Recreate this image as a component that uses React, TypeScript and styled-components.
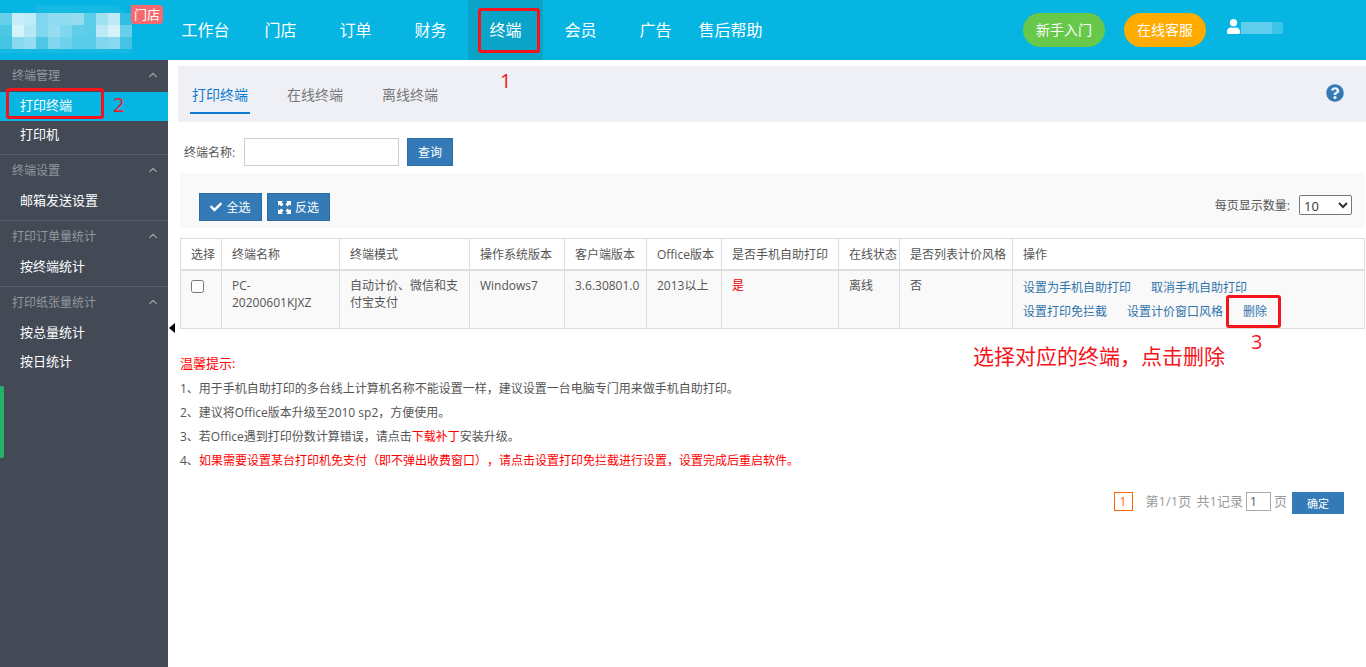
import { createGlobalStyle, styled } from "styled-components";
import { FaCheck, FaQuestionCircle, FaUser } from "react-icons/fa";
import { FiChevronUp } from "react-icons/fi";

const GlobalStyle = createGlobalStyle`
  html, body { margin: 0; padding: 0; background: #fff; }
  body {
    font-family: "Open Sans", "Noto Sans CJK SC", "Liberation Sans", sans-serif;
    font-size: 12px;
    color: #555;
    overflow: hidden;
    text-spacing-trim: space-all;
  }
  * { box-sizing: border-box; }
`;

const Page = styled.div`
  position: relative;
  width: 1366px;
  height: 667px;
  overflow: hidden;
`;

const Header = styled.header`
  display: flex;
  align-items: stretch;
  height: 60px;
  background: #06b5e2;
`;
const LogoArea = styled.div`
  position: relative;
  width: 168px;
  flex: none;
`;
const Mosaic = styled.svg`
  position: absolute;
  left: 0;
  top: 6px;
`;
const Badge = styled.span`
  position: absolute;
  left: 131px;
  top: 5px;
  width: 32px;
  height: 19px;
  border-radius: 0 4px 4px 4px;
  background: #f8696f;
  color: #fff;
  font-size: 13px;
  line-height: 19px;
  text-align: center;
`;
const Nav = styled.nav`
  display: flex;
`;
const NavItem = styled.a<{ $active?: boolean }>`
  width: 75px;
  height: 60px;
  color: #fff;
  font-size: 16px;
  line-height: 60px;
  text-align: center;
  white-space: nowrap;
  background: ${(p) => (p.$active ? "#0ba4c9" : "transparent")};
`;
const HeaderRight = styled.div`
  display: flex;
  align-items: center;
  margin-left: auto;
  padding-right: 81px;
`;
const PillButton = styled.a<{ $bg: string }>`
  width: 82px;
  height: 34px;
  margin-right: 19px;
  border-radius: 17px;
  background: ${(p) => p.$bg};
  color: #fff;
  font-size: 14px;
  line-height: 34px;
  text-align: center;
`;
const UserBox = styled.div`
  display: flex;
  align-items: center;
  width: 59px;
  margin: -8px 0 0 1px;
  color: #fff;
  font-size: 15px;
`;
const BlurName = styled.span`
  width: 42px;
  height: 12px;
  margin-top: 4px;
  background: linear-gradient(90deg, #5fcdec 0 75%, #3cc3e8 75% 100%);
`;

const Body = styled.div`
  display: flex;
  height: 607px;
`;
const Sidebar = styled.aside`
  position: relative;
  width: 168px;
  flex: none;
  background: #434a56;
`;
const Group = styled.div`
  padding-bottom: 4px;
  & + & { border-top: 1px solid #5a606b; }
`;
const GroupTitle = styled.div`
  display: flex;
  align-items: center;
  justify-content: space-between;
  height: 32px;
  padding: 0 8px 2px 12px;
  color: #93979e;
  font-size: 12px;
`;
const SideItem = styled.a<{ $active?: boolean }>`
  display: block;
  height: 29px;
  padding-left: 20px;
  background: ${(p) => (p.$active ? "#06b5e2" : "transparent")};
  color: #fff;
  font-size: 13px;
  line-height: 26px;
`;
const GreenStrip = styled.div`
  position: absolute;
  left: 0;
  top: 326px;
  width: 4px;
  height: 72px;
  border-radius: 0 2px 2px 0;
  background: #25b368;
`;
const CollapseArrow = styled.div`
  position: absolute;
  left: 169px;
  top: 263px;
  width: 0;
  height: 0;
  border-top: 5px solid transparent;
  border-bottom: 5px solid transparent;
  border-right: 6px solid #000;
`;

const Main = styled.main`
  flex: 1;
  padding: 6px 2px 0 10px;
`;
const TabBar = styled.div`
  display: flex;
  align-items: flex-start;
  gap: 35px;
  height: 56px;
  margin-right: -2px;
  padding: 13px 0 0 12px;
  position: relative;
  background: #eff0f5;
`;
const Tab = styled.a<{ $active?: boolean }>`
  height: 35px;
  padding: 0 2px;
  border-bottom: 2px solid ${(p) => (p.$active ? "#0c7bd0" : "transparent")};
  color: ${(p) => (p.$active ? "#0c7bd0" : "#777")};
  font-size: 14px;
  line-height: 32px;
`;
const HelpIcon = styled(FaQuestionCircle)`
  position: absolute;
  right: 23px;
  top: 18px;
  color: #337ab7;
  font-size: 18px;
`;

const SearchRow = styled.div`
  display: flex;
  align-items: center;
  height: 28px;
  margin: 16px 0 7px 6px;
`;
const Label = styled.label`
  color: #555;
  font-size: 12px;
  white-space: nowrap;
`;
const TextInput = styled.input`
  width: 155px;
  height: 28px;
  margin: 0 8px 0 auto;
  border: 1px solid #ccc;
  outline: 0;
  background: #fff;
`;
const SearchField = styled.div`
  display: flex;
  align-items: center;
  width: 223px;
`;
const BlueButton = styled.button`
  display: inline-flex;
  align-items: center;
  justify-content: center;
  gap: 4px;
  height: 28px;
  padding: 0;
  border: 1px solid #2e6da4;
  background: #337ab7;
  color: #fff;
  font-family: inherit;
  font-size: 12px;
`;
const QueryButton = styled(BlueButton)`
  width: 46px;
`;
const ActionButton = styled(BlueButton)`
  width: 63px;
`;

const Toolbar = styled.div`
  display: flex;
  align-items: flex-end;
  gap: 5px;
  height: 55px;
  margin: 0 0 10px 2px;
  padding: 0 13px 7px 19px;
  background: #f9f9f9;
`;
const PageSize = styled.div`
  display: flex;
  align-items: center;
  gap: 9px;
  height: 20px;
  margin: 0 0 6px auto;
`;
const SizeSelect = styled.select`
  width: 53px;
  height: 20px;
  border: 1px solid #777;
  border-radius: 2px;
  background: #fff;
  color: #333;
  font-family: inherit;
  font-size: 13px;
`;

const Table = styled.table`
  width: 1184px;
  margin-left: 2px;
  border-collapse: collapse;
  table-layout: fixed;
  font-size: 12px;
`;
const Th = styled.th`
  height: 31px;
  padding: 0 0 0 10px;
  border: 1px solid #ddd;
  border-bottom-width: 2px;
  color: #555;
  font-weight: 400;
  text-align: left;
  white-space: nowrap;
`;
const Td = styled.td`
  height: 59px;
  padding: 6px 10px 0;
  border: 1px solid #ddd;
  background: #f9f9f9;
  color: #555;
  line-height: 17px;
  vertical-align: top;
`;
const NarrowTd = styled(Td)`
  padding-right: 0;
  white-space: nowrap;
`;
const RedCell = styled(Td)`
  color: #e00;
`;
const CheckCell = styled(Td)`
  padding: 9px 0 0 10px;
`;
const CheckBox = styled.input`
  display: block;
  width: 13px;
  height: 13px;
  margin: 0;
`;
const ActionRow = styled.div`
  display: flex;
  gap: 20px;
  height: 24px;
  line-height: 24px;
  white-space: nowrap;
`;
const ActionLink = styled.a`
  color: #2f74ad;
`;
const ActionCell = styled(Td)`
  padding-top: 5px;
`;

const Tips = styled.div`
  margin: 22px 0 0 2px;
  line-height: 24px;
  color: #555;
`;
const TipTitle = styled.div`
  margin-bottom: 2px;
  color: #f00;
  font-size: 13px;
`;
const Red = styled.span`
  color: #f00;
`;

const Pager = styled.div`
  display: flex;
  align-items: flex-start;
  justify-content: flex-end;
  margin: 19px 21px 0 0;
  color: #999;
  font-size: 13px;
  line-height: 19px;
  word-spacing: 2px;
`;
const PageNum = styled.span`
  width: 19px;
  height: 19px;
  margin-right: 13px;
  border: 1px solid #f60;
  color: #f60;
  font-size: 12px;
  line-height: 17px;
  text-align: center;
`;
const PageInput = styled.input`
  width: 25px;
  height: 19px;
  margin: 0 3px;
  padding: 0 0 0 3px;
  border: 1px solid #aaa;
  color: #555;
  font-family: inherit;
  font-size: 12px;
`;
const ConfirmButton = styled(BlueButton)`
  width: 52px;
  height: 22px;
  margin-left: 5px;
  border: 0;
  font-size: 11px;
`;

const Mark = styled.div`
  position: absolute;
  border: 3px solid #f5141c;
  border-radius: 3px;
`;
const Note = styled.span`
  position: absolute;
  color: #f5141c;
  font-size: 20px;
  line-height: 1;
  white-space: nowrap;
`;
const HintNote = styled(Note)`
  font-size: 21px;
`;

const navItems = ["工作台", "门店", "订单", "财务", "终端", "会员", "广告", "售后帮助"];
const columns = [
  ["选择", 41],
  ["终端名称", 118],
  ["终端模式", 130],
  ["操作系统版本", 95],
  ["客户端版本", 82],
  ["Office版本", 75],
  ["是否手机自助打印", 117],
  ["在线状态", 61],
  ["是否列表计价风格", 113],
  ["操作", 352],
] as const;
const sideGroups = [
  { title: "终端管理", items: ["打印终端", "打印机"] },
  { title: "终端设置", items: ["邮箱发送设置"] },
  { title: "打印订单量统计", items: ["按终端统计"] },
  { title: "打印纸张量统计", items: ["按总量统计", "按日统计"] },
];
// pixelated (blurred out) logo from the screenshot
const mosaic = [
  ["#66cfe9", "#c7eef8", "#bdebf7", "#7fd6ee", "#8fdbf0", "#8fdbf0", "#95dcf1", "#5ccde9", "#9fe0f3", "#bdeaf6", "#30bfe0"],
  ["#4cc8e6", "#d6f2fa", "#b5e8f6", "#80d7ee", "#96ddf1", "#7fd6ee", "#5fcfe9", "#5ccde9", "#bce9f6", "#d6f3fa", "#66d0ea"],
  ["#45c5e4", "#8bd9ef", "#96ddf1", "#4fc8e6", "#80d7ee", "#6fd2ec", "#58cce8", "#58cce8", "#7fd6ee", "#88d9ef", "#44c3e3"],
];

function ExpandIcon() {
  return (
    <svg width="13" height="13" viewBox="0 0 13 13" fill="#fff">
      <path d="M0 0h5L3.6 1.4 5.5 3.3 3.3 5.5 1.4 3.6 0 5zM13 0v5l-1.4-1.4-1.9 1.9-2.2-2.2 1.9-1.9L8 0zM0 13V8l1.4 1.4 1.9-1.9 2.2 2.2-1.9 1.9L5 13zM13 13H8l1.4-1.4-1.9-1.9 2.2-2.2 1.9 1.9L13 8z" />
    </svg>
  );
}

export default function App() {
  return (
    <Page>
      <GlobalStyle />
      <Header>
        <LogoArea>
          <Mosaic width="132" height="47" viewBox="0 0 132 47">
            <path d="M36 7V3a3 3 0 0 1 3-3h74c6 0 9 3 11 7zM0 43h132c0 2-2 4-5 4H0z" fill="#16b9e1" />
            {mosaic.map((row, y) =>
              row.map((c, x) => <rect key={x + "-" + y} x={x * 12} y={7 + y * 12} width="12" height="12" fill={c} />)
            )}
          </Mosaic>
          <Badge>门店</Badge>
        </LogoArea>
        <Nav>
          {navItems.map((n) => (
            <NavItem key={n} $active={n === "终端"}>
              {n}
            </NavItem>
          ))}
        </Nav>
        <HeaderRight>
          <PillButton $bg="#67c84a">新手入门</PillButton>
          <PillButton $bg="#ffab00">在线客服</PillButton>
          <UserBox>
            <FaUser />
            <BlurName />
          </UserBox>
        </HeaderRight>
      </Header>
      <Body>
        <Sidebar>
          {sideGroups.map((g) => (
            <Group key={g.title}>
              <GroupTitle>
                {g.title}
                <FiChevronUp size={14} />
              </GroupTitle>
              {g.items.map((i) => (
                <SideItem key={i} $active={i === "打印终端"}>
                  {i}
                </SideItem>
              ))}
            </Group>
          ))}
          <GreenStrip />
          <CollapseArrow />
        </Sidebar>
        <Main>
          <TabBar>
            <Tab $active>打印终端</Tab>
            <Tab>在线终端</Tab>
            <Tab>离线终端</Tab>
            <HelpIcon />
          </TabBar>
          <SearchRow>
            <SearchField>
              <Label>终端名称:</Label>
              <TextInput />
            </SearchField>
            <QueryButton>查询</QueryButton>
          </SearchRow>
          <Toolbar>
            <ActionButton>
              <FaCheck size={12} />
              全选
            </ActionButton>
            <ActionButton>
              <ExpandIcon />
              反选
            </ActionButton>
            <PageSize>
              <Label>每页显示数量:</Label>
              <SizeSelect defaultValue="10">
                <option>10</option>
              </SizeSelect>
            </PageSize>
          </Toolbar>
          <Table>
            <colgroup>
              {columns.map(([name, w]) => (
                <col key={name} width={w} />
              ))}
            </colgroup>
            <thead>
              <tr>
                {columns.map(([name]) => (
                  <Th key={name}>{name}</Th>
                ))}
              </tr>
            </thead>
            <tbody>
              <tr>
                <CheckCell>
                  <CheckBox type="checkbox" />
                </CheckCell>
                <Td>PC-20200601KJXZ</Td>
                <Td>自动计价、微信和支付宝支付</Td>
                <Td>Windows7</Td>
                <NarrowTd>3.6.30801.0</NarrowTd>
                <NarrowTd>2013以上</NarrowTd>
                <RedCell>是</RedCell>
                <Td>离线</Td>
                <Td>否</Td>
                <ActionCell>
                  <ActionRow>
                    <ActionLink>设置为手机自助打印</ActionLink>
                    <ActionLink>取消手机自助打印</ActionLink>
                  </ActionRow>
                  <ActionRow>
                    <ActionLink>设置打印免拦截</ActionLink>
                    <ActionLink>设置计价窗口风格</ActionLink>
                    <ActionLink>删除</ActionLink>
                  </ActionRow>
                </ActionCell>
              </tr>
            </tbody>
          </Table>
          <Tips>
            <TipTitle>温馨提示:</TipTitle>
            <div>1、用于手机自助打印的多台线上计算机名称不能设置一样，建议设置一台电脑专门用来做手机自助打印。</div>
            <div>2、建议将Office版本升级至2010 sp2，方便使用。</div>
            <div>
              3、若Office遇到打印份数计算错误，请点击<Red>下载补丁</Red>安装升级。
            </div>
            <div>
              4、<Red>如果需要设置某台打印机免支付（即不弹出收费窗口），请点击设置打印免拦截进行设置，设置完成后重启软件。</Red>
            </div>
          </Tips>
          <Pager>
            <PageNum>1</PageNum>
            第1/1页 共1记录
            <PageInput defaultValue="1" />页
            <ConfirmButton>确定</ConfirmButton>
          </Pager>
        </Main>
      </Body>
      <Mark style={{ left: 478, top: 8, width: 62, height: 45 }} />
      <Mark style={{ left: 6, top: 88, width: 98, height: 31 }} />
      <Mark style={{ left: 1226, top: 295, width: 55, height: 33 }} />
      <Note style={{ left: 500, top: 71 }}>1</Note>
      <Note style={{ left: 113, top: 95 }}>2</Note>
      <Note style={{ left: 1251, top: 332 }}>3</Note>
      <HintNote style={{ left: 973, top: 346 }}>选择对应的终端，点击删除</HintNote>
    </Page>
  );
}
